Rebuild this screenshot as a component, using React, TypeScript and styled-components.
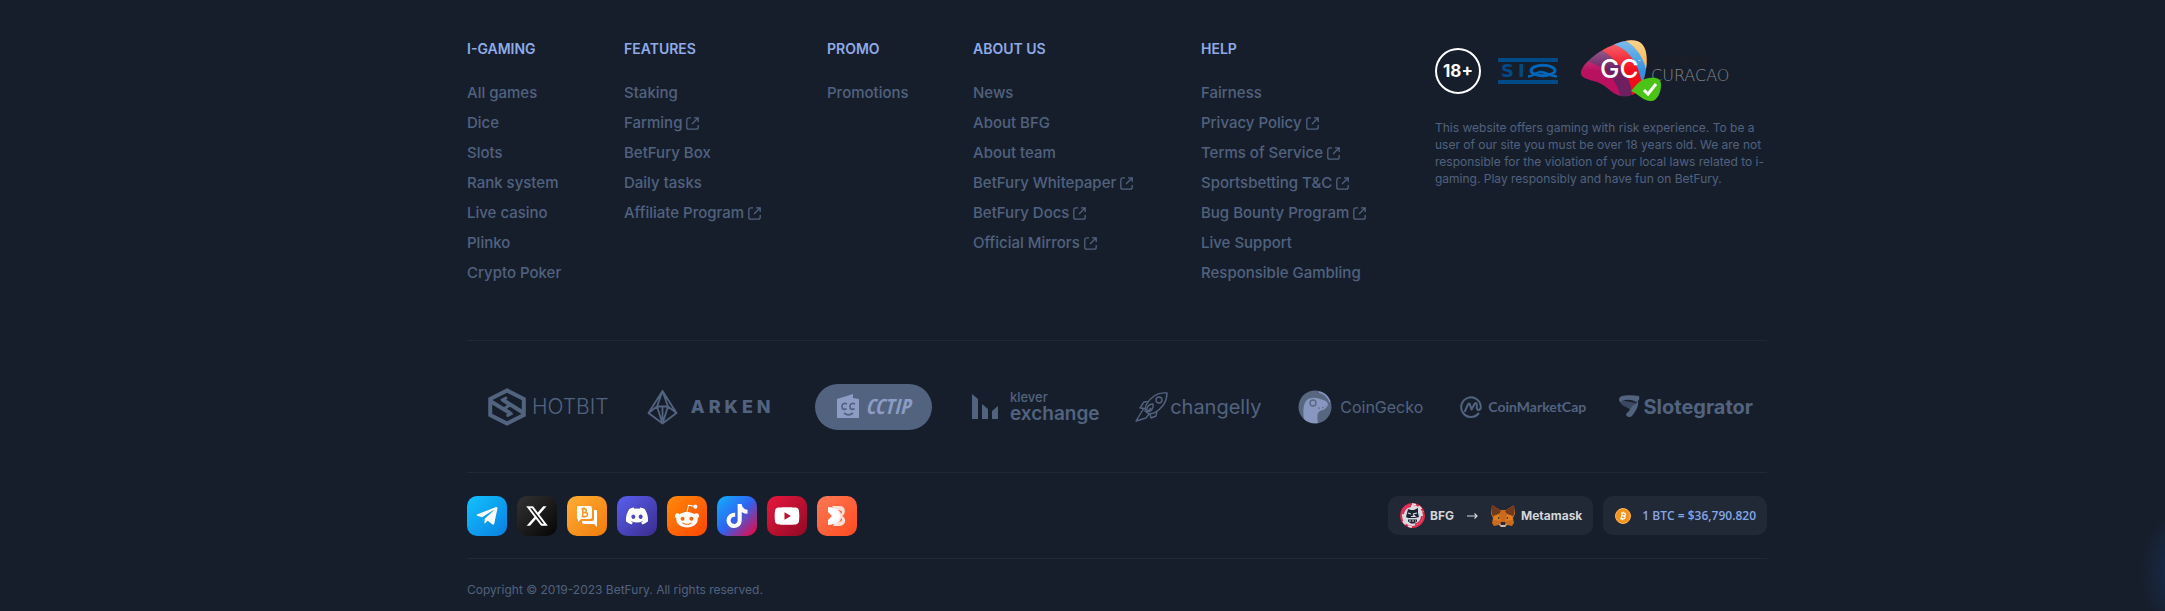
import React from "react";
import styled, { createGlobalStyle } from "styled-components";
import { FaTelegramPlane, FaDiscord, FaRedditAlien, FaTiktok, FaYoutube } from "react-icons/fa";
import { FaXTwitter } from "react-icons/fa6";

const GlobalStyle = createGlobalStyle`
  *, *::before, *::after { box-sizing: border-box; }
  body {
    margin: 0;
    background: #171e2b;
    font-family: Inter, "Open Sans", sans-serif;
  }
  svg { display: block; flex: none; }
`;

const Page = styled.div`
  min-height: 100vh;
  padding: 39px 16px 13px 85px;
  background: radial-gradient(circle 77px at calc(100% + 52px) calc(100% - 39px), #1b3f7a 0%, #172842 68%, #171e2b 100%) #171e2b;
`;

const Footer = styled.footer`
  max-width: 1300px;
  margin: 0 auto;
`;

const Columns = styled.div`
  display: grid;
  grid-template-columns: 157fr 203fr 146fr 228fr 234fr 332fr;
  padding-bottom: 57px;
`;

const Heading = styled.h2`
  margin: 0 0 24px;
  font-size: 14px;
  line-height: 20px;
  font-weight: 600;
  color: #8eabe8;
  text-transform: uppercase;
`;

const List = styled.ul`
  display: flex;
  flex-direction: column;
  gap: 10px;
  margin: 0;
  padding: 0;
  list-style: none;
`;

const NavLink = styled.a`
  display: flex;
  align-items: center;
  gap: 4px;
  width: fit-content;
  font-size: 15px;
  line-height: 20px;
  font-weight: 500;
  color: #50627f;
  text-decoration: none;
  white-space: nowrap;
`;

const Licences = styled.div`
  display: flex;
  align-items: center;
  height: 64px;
`;

const Age = styled.span`
  display: flex;
  align-items: center;
  justify-content: center;
  width: 46px;
  height: 46px;
  margin-right: 17px;
  border: 2px solid #fff;
  border-radius: 50%;
  font-size: 17px;
  font-weight: 700;
  color: #fff;
`;

const Note = styled.p`
  margin: 16px 0 0;
  font-size: 12px;
  line-height: 17px;
  font-weight: 400;
  color: #50627f;
`;

const Partners = styled.div`
  display: grid;
  grid-template-columns: repeat(8, 1fr);
  height: 133px;
  border-top: 1px solid #212936;
  border-bottom: 1px solid #212936;
`;

const Partner = styled.a<{ $gap: number }>`
  display: flex;
  align-items: center;
  justify-content: center;
  gap: ${(p) => p.$gap}px;
  color: #52637f;
  text-decoration: none;
  white-space: nowrap;
`;

const Mark = styled.span<{ $size: number; $weight: number; $family?: string; $italic?: boolean; $track?: number }>`
  font-family: ${(p) => p.$family || "Inter"}, sans-serif;
  font-size: ${(p) => p.$size}px;
  line-height: 1;
  font-weight: ${(p) => p.$weight};
  font-style: ${(p) => (p.$italic ? "italic" : "normal")};
  letter-spacing: ${(p) => (p.$track ? `${p.$track}px` : "normal")};
`;

const Stack = styled.span`
  display: flex;
  flex-direction: column;
`;

const CctipPill = styled.span`
  display: flex;
  align-items: center;
  justify-content: center;
  gap: 5px;
  width: 117px;
  height: 46px;
  border-radius: 23px;
  background: #52637f;
  color: #8c9cc4;
`;

const Bar = styled.div`
  display: flex;
  align-items: center;
  justify-content: space-between;
  height: 86px;
  border-bottom: 1px solid #212936;
`;

const Row = styled.div`
  display: flex;
  align-items: flex-end;
  gap: 10px;
`;

const Social = styled.a<{ $from: string; $to: string; $mid?: string }>`
  display: flex;
  align-items: center;
  justify-content: center;
  width: 40px;
  height: 40px;
  border-radius: 10px;
  background: linear-gradient(135deg, ${(p) => p.$from}, ${(p) => (p.$mid ? `${p.$mid}, ` : "")}${(p) => p.$to});
  color: #fff;
`;

const Chip = styled.button<{ $blue?: boolean }>`
  display: flex;
  align-items: center;
  height: 39px;
  padding: 0 11px 0 12px;
  border: 0;
  border-radius: 10px;
  background: #212936;
  font-family: ${(p) => (p.$blue ? '"Open Sans"' : "Inter")}, sans-serif;
  font-size: 12px;
  line-height: 16px;
  font-weight: ${(p) => (p.$blue ? 600 : 700)};
  color: ${(p) => (p.$blue ? "#84a6e8" : "#d3d5d9")};
  white-space: nowrap;
`;

const Spaced = styled.span<{ $l: number; $r?: number }>`
  margin-left: ${(p) => p.$l}px;
  margin-right: ${(p) => p.$r || 0}px;
`;

const Copyright = styled.p`
  margin: 22px 0 0;
  font-size: 12px;
  line-height: 17px;
  color: #50627f;
`;

const ExternalIcon = () => (
  <svg width="13" height="13" viewBox="0 0 13 13" fill="none" stroke="currentColor" strokeWidth="1.3" aria-hidden="true">
    <path d="M5 .8H2.8a2 2 0 0 0-2 2v7.4a2 2 0 0 0 2 2h7.4a2 2 0 0 0 2-2V8M8 .8h4.2V5M12 1 6 7" />
  </svg>
);

type Item = { label: string; external?: boolean };
const x = (label: string): Item => ({ label, external: true });
const l = (label: string): Item => ({ label });

const groups: { title: string; items: Item[] }[] = [
  { title: "I-Gaming", items: [l("All games"), l("Dice"), l("Slots"), l("Rank system"), l("Live casino"), l("Plinko"), l("Crypto Poker")] },
  { title: "Features", items: [l("Staking"), x("Farming"), l("BetFury Box"), l("Daily tasks"), x("Affiliate Program")] },
  { title: "Promo", items: [l("Promotions")] },
  { title: "About us", items: [l("News"), l("About BFG"), l("About team"), x("BetFury Whitepaper"), x("BetFury Docs"), x("Official Mirrors")] },
  {
    title: "Help",
    items: [l("Fairness"), x("Privacy Policy"), x("Terms of Service"), x("Sportsbetting T&C"), x("Bug Bounty Program"), l("Live Support"), l("Responsible Gambling")],
  },
];

const SiqLogo = () => (
  <svg width="60" height="28" viewBox="0 0 60 28" role="img" aria-label="SIQ">
    <path fill="#004b87" d="M0 1h60v4H0zM0 23h60v4H0z" />
    <g fontFamily="DejaVu Sans" fontWeight="700" fontSize="18" fill="#004b87">
      <text x="3" y="20">S</text>
      <text x="20" y="20">I</text>
    </g>
    <ellipse cx="45" cy="13.5" rx="12" ry="5.2" fill="none" stroke="#0066b8" strokeWidth="3" />
    <path d="M30 19.5c5 0 8-4 12-4.500 6-.5 9 4.500 17 4.500" fill="none" stroke="#0066b8" strokeWidth="2.400" />
  </svg>
);

const CuracaoLogo = () => (
  <svg width="160" height="64" viewBox="0 0 160 64" role="img" aria-label="Gaming Curacao">
    <defs>
      <clipPath id="gem">
        <path d="M1 35C0 28 14 14 31 7 41 2 50 0 57 2c9 3 11 14 9 28-2 14-7 25-17 27-9 2-16-3-23-9C17 40 3 42 1 35Z" />
      </clipPath>
      <linearGradient id="shine" x1="0" y1="0" x2="0" y2="1">
        <stop offset="0" stopColor="#fff" stopOpacity=".4" />
        <stop offset=".5" stopColor="#fff" stopOpacity="0" />
      </linearGradient>
    </defs>
    <g clipPath="url(#gem)">
      <path fill="#6d1f60" d="M0 0h70v64H0z" />
      <path fill="#b9105f" d="M0 20 9 23C24 27 35 40 39 52l2 8H0z" />
      <path fill="#f20d1c" d="M20 10C40 22 53 40 52 60h16V30C62 20 50 8 34 4z" />
      <path fill="#2f93e0" d="M32 5C45 8 57 20 61 40l1 9 8-20L58 8 42 1z" />
      <path fill="#f8b545" d="M43 1C52 4 62 14 66 30l4-2V0z" />
      <path fill="url(#shine)" d="M0 0h70v64H0z" />
    </g>
    <g fontFamily="DejaVu Sans">
      <text x="71" y="27" fontSize="14" fill="#1d1e24">GAMING</text>
      <text x="71" y="42" fontSize="16" fontWeight="200" fill="#85878c">CURACAO</text>
    </g>
    <g fontFamily="Inter" fill="#fff">
      <text x="20" y="39" fontSize="26" fontWeight="500">GC</text>
      <text x="58" y="24" fontSize="4">™</text>
    </g>
    <path fill="#4cc417" d="M51 52c4-4 8-12 18-13 9-1 12 1 12 7 0 8-4 16-10 16-8 0-11-6-20-10Z" />
    <path d="m64 51 4 4 8-10" fill="none" stroke="#fff" strokeWidth="3" />
  </svg>
);

const HotbitIcon = () => (
  <svg width="38" height="38" viewBox="0 0 38 38" fill="none" stroke="currentColor" aria-hidden="true">
    <path strokeWidth="4" d="M19 2.400 35.800 11v16L19 35.600 2.200 27V11z" />
    <path strokeWidth="4" d="M3 13.500 22 25M35 24.500 15 12" />
    <path strokeWidth="3" d="M15.500 21.500 22 16.500M13 12.500l6-3M18.500 28l6-3" />
  </svg>
);

const ArkenIcon = () => (
  <svg width="31" height="36" viewBox="0 0 31 36" fill="none" stroke="currentColor" strokeWidth="1.800" strokeLinejoin="round" aria-hidden="true">
    <path d="M15.500 2 29.500 24 15.500 34.500 1.500 24zM15.500 2 10 17.500l5.500 17L21 17.500zM10 17.500h11L29.500 24M10 17.500 1.500 24M15.500 17.500v17" />
  </svg>
);

const CctipIcon = () => (
  <svg width="24" height="25" viewBox="0 0 24 25" aria-hidden="true">
    <path fill="currentColor" d="M1 5 17 0v4l6 1v19H1z" />
    <g fill="none" stroke="#52637f" strokeWidth="1.700">
      <path d="M11 10c-3-1.500-5 0-5 2.500s2 4 4.500 2M19 10c-3-1.500-5 0-5 2.500s2 4 4.500 2M8 19c3 2.500 6 2.500 9 0" />
    </g>
  </svg>
);

const KleverIcon = () => (
  <svg width="27" height="26" viewBox="0 0 27 26" fill="currentColor" aria-hidden="true">
    <path d="M0 0 6 5v20H0zM10 10l6 5v10h-6zM26 12v13h-6v-8z" />
  </svg>
);

const RocketIcon = () => (
  <svg width="33" height="30" viewBox="0 0 33 30" fill="none" stroke="currentColor" strokeWidth="1.400" strokeLinejoin="round" aria-hidden="true">
    <path d="M32 1C23 0 16 4 11 13l-1 6 4 3 5-1C28 16 32 10 32 1ZM14 9.500 9 10l-4 6 5 .5M22 19l-1 5-5 2-1-4" />
    <circle cx="24" cy="8" r="3" />
    <path d="M9 16 1 29l10-3 3-4M18 12c-5 0-7 4-6 8 4 0 7-4 6-8ZM12 20l4-4" />
  </svg>
);

const GeckoIcon = () => (
  <svg width="34" height="34" viewBox="0 0 34 34" aria-hidden="true">
    <circle cx="17" cy="17" r="16.500" fill="#56677f" />
    <path fill="#8797bf" d="M6 29C5 22 5 15 8 11c3-4 9-4 14-2 4 1 7 2 8 5-1 5-5 6-8 7-3 2-3 6-2 12C14 34 9 32 6 29Z" />
    <path d="M21 2c5 1 9 5 11 10" fill="none" stroke="#8797bf" strokeWidth="1.500" />
    <circle cx="15" cy="13" r="3" fill="none" stroke="#56677f" strokeWidth="1.300" />
    <path d="M20 18c3 .5 5 0 8-2" fill="none" stroke="#56677f" strokeWidth="1" strokeDasharray="2 2" />
  </svg>
);

const CmcIcon = () => (
  <svg width="22" height="22" viewBox="0 0 22 22" fill="none" stroke="currentColor" strokeWidth="2" strokeLinecap="round" strokeLinejoin="round" aria-hidden="true">
    <path d="M18.500 17.500A9.800 9.800 0 1 1 20.800 11c0 3.500-4 4-4 1V9c0-2.500-1.500-2.500-2.300-1L11.500 13.500 10 8.500C9.500 7 8.500 7 8 8.500l-3 6.500" />
  </svg>
);

const SlotIcon = () => (
  <svg width="21" height="23" viewBox="0 0 21 23" aria-hidden="true">
    <path fill="#3b4860" d="M1 6c4-1 9 1 16 2l-5 8C9 11 2 12 1 6Z" />
    <path fill="currentColor" d="M0 5c0-3 2-4 6-4.500 5-.5 9-.5 14 .5 1 3 0 5-3 6C12 4 5 4 1 7.500zM19 5c1 6-2 11-6 16-2 2-6 1-6-2 3-3 5-5 6-8 3-1 5-3 6-6Z" />
  </svg>
);

const ChatIcon = () => (
  <svg width="22" height="22" viewBox="0 0 22 22" aria-hidden="true">
    <path fill="#fff" d="M2 1h12a2 2 0 0 1 2 2v9a2 2 0 0 1-2 2H5l-3 3v-3H1V2zM18 5h2a1 1 0 0 1 1 1v16l-3-3H8a2 2 0 0 1-2-2v-1h10a2 2 0 0 0 2-2z" />
    <path fill="none" stroke="#f6981d" strokeWidth="1.500" d="M5.500 3.700H9a2 2 0 0 1 0 3.800H6.500h3a2 2 0 0 1 0 4h-4M6.800 3.700v7.800M8 2.300v1.400M8 11.500v1.300" />
  </svg>
);

const RibbonIcon = () => (
  <svg width="20" height="22" viewBox="0 0 20 22" aria-hidden="true">
    <path fill="#ffe0d6" fillRule="evenodd" d="M5 1h8c6 0 6 8 2 10 5 2 4 10-3 10H6l5-10zM11 5c2 1 3 3 3 4 2-1 1-4-3-4ZM14 13c0 2-1 3-2 4 3 0 4-3 2-4Z" />
    <path fill="#fff" d="M1 2c7 0 12 4 12 9s-5 9-12 9l0-5 4-4-4-4z" />
  </svg>
);

const BfgIcon = () => (
  <svg width="25" height="25" viewBox="0 0 25 25" aria-hidden="true">
    <circle cx="12.500" cy="12.500" r="11.500" fill="#d9dbe0" stroke="#dc2a50" strokeWidth="2" />
    <path d="M12 1a11.500 11.500 0 0 1 11 8M12 24A11.500 11.500 0 0 1 2 16" fill="none" stroke="#e5e5ea" strokeWidth="1.500" strokeDasharray="4 3" />
    <path d="M3 11a9.500 9.500 0 0 1 8-8M22 13a9.500 9.500 0 0 1-7 8.500" fill="none" stroke="#dc2a50" strokeWidth="2" />
    <path fill="#1c2230" d="m8 6 3 1h3l4-2v5l1 4-4 1H8l-2-1 1-4z" />
    <path d="m8 10 3 1M17 10l-4 1M11 13.500h4l-2-2" fill="none" stroke="#d9dbe0" strokeWidth="1.200" />
    <path fill="#1c2230" d="M8 16.500h9v2l-3 2h-3l-3-2z" />
    <path d="M9 18h7" stroke="#d9dbe0" strokeDasharray="2 1" />
  </svg>
);

const FoxIcon = () => (
  <svg width="24" height="23" viewBox="0 0 24 23" aria-hidden="true">
    <path fill="#c96a1c" d="m1 1 8 5h6l8-5 1 9-2 4 1 5-2 3-5-1-2 2h-4l-2-2-5 1-2-3 1-5-2-4z" />
    <path fill="#6f3a1d" d="m1 1 9 6-2 3-6 2-1-2zM23 1l-9 6 2 3 6 2 1-2z" />
    <path fill="#e07c22" d="m8 10 2 7-8-1 1-4zM16 10l-2 7 8-1-1-4z" />
    <path fill="#2a2a2e" d="m7 13 2 1-2 1zM17 13l-2 1 2 1zM10 18h4l1 2H9z" />
    <path fill="#c9bdb2" d="m8 20 2-.5h4l2 .5-2 3h-4z" />
    <path fill="#2a2a2e" d="M10 19h4l.5 2h-5z" />
  </svg>
);

const BtcIcon = () => (
  <svg width="16" height="16" viewBox="0 0 16 16" aria-hidden="true">
    <circle cx="8" cy="8" r="7.500" fill="#f7931a" stroke="#f9b65f" />
    <path d="M6.200 4.800 9.200 5.200c2 .5 1.500 2.600-.4 2.600H6.500h2.200c2.300.3 1.700 3-.4 3L5.200 10.600M7.200 5l-1 5.800M8.400 3.800 8.200 5M7.400 11l-.2 1.200" fill="none" stroke="#fff" strokeWidth="1.300" />
  </svg>
);

const ArrowIcon = () => (
  <svg width="11" height="8" viewBox="0 0 11 8" fill="none" stroke="currentColor" strokeWidth="1.200" aria-hidden="true">
    <path d="M0 4h10M7.500 1.500 10 4 7.500 6.500" />
  </svg>
);

export default function App() {
  return (
    <>
      <GlobalStyle />
      <Page>
        <Footer>
          <Columns>
            {groups.map((group) => (
              <nav key={group.title} aria-label={group.title}>
                <Heading>{group.title}</Heading>
                <List>
                  {group.items.map((item) => (
                    <li key={item.label}>
                      <NavLink href="#">
                        {item.label}
                        {item.external && <ExternalIcon />}
                      </NavLink>
                    </li>
                  ))}
                </List>
              </nav>
            ))}
            <aside>
              <Licences>
                <Age>18+</Age>
                <SiqLogo />
                <Spaced $l={22}>
                  <CuracaoLogo />
                </Spaced>
              </Licences>
              <Note>
                This website offers gaming with risk experience. To be a<br />
                user of our site you must be over 18 years old. We are not<br />
                responsible for the violation of your local laws related to i-<br />
                gaming. Play responsibly and have fun on BetFury.
              </Note>
            </aside>
          </Columns>

          <Partners>
            <Partner href="#" $gap={6}>
              <HotbitIcon />
              <Mark $size={21} $weight={300}>HOTBIT</Mark>
            </Partner>
            <Partner href="#" $gap={13}>
              <ArkenIcon />
              <Mark $size={18} $weight={800} $track={4}>ARKEN</Mark>
            </Partner>
            <Partner href="#" $gap={0}>
              <CctipPill>
                <CctipIcon />
                <Mark $size={21} $weight={800} $italic $family="Open Sans Condensed, Open Sans">CCTIP</Mark>
              </CctipPill>
            </Partner>
            <Partner href="#" $gap={11}>
              <KleverIcon />
              <Stack>
                <Mark $size={13} $weight={500}>klever</Mark>
                <Mark $size={19} $weight={600}>exchange</Mark>
              </Stack>
            </Partner>
            <Partner href="#" $gap={2}>
              <RocketIcon />
              <Mark $size={20} $weight={400}>changelly</Mark>
            </Partner>
            <Partner href="#" $gap={8}>
              <GeckoIcon />
              <Mark $size={16} $weight={400}>CoinGecko</Mark>
            </Partner>
            <Partner href="#" $gap={6}>
              <CmcIcon />
              <Mark $size={14} $weight={700} $family="Lato">CoinMarketCap</Mark>
            </Partner>
            <Partner href="#" $gap={4}>
              <SlotIcon />
              <Mark $size={20} $weight={700}>Slotegrator</Mark>
            </Partner>
          </Partners>

          <Bar>
            <Row>
              <Social href="#" aria-label="Telegram" $from="#12c2ff" $to="#0a7fe0"><FaTelegramPlane size={24} /></Social>
              <Social href="#" aria-label="X" $from="#333333" $to="#050505"><FaXTwitter size={24} /></Social>
              <Social href="#" aria-label="Bitcointalk" $from="#ffad33" $to="#f07c0c"><ChatIcon /></Social>
              <Social href="#" aria-label="Discord" $from="#5a5ff0" $to="#3a2c8c"><FaDiscord size={24} /></Social>
              <Social href="#" aria-label="Reddit" $from="#ff8a0a" $to="#ff4500"><FaRedditAlien size={26} /></Social>
              <Social href="#" aria-label="TikTok" $from="#12b0ff" $mid="#2f63f0" $to="#fa0032"><FaTiktok size={24} /></Social>
              <Social href="#" aria-label="YouTube" $from="#e8173f" $to="#8f0a22"><FaYoutube size={26} /></Social>
              <Social href="#" aria-label="Blog" $from="#ff7a55" $to="#ff4a20"><RibbonIcon /></Social>
            </Row>
            <Row>
              <Chip type="button">
                <BfgIcon />
                <Spaced $l={5} $r={13}>BFG</Spaced>
                <ArrowIcon />
                <Spaced $l={13} $r={6}><FoxIcon /></Spaced>
                Metamask
              </Chip>
              <Chip type="button" $blue>
                <BtcIcon />
                <Spaced $l={11}>1 BTC = $36,790.820</Spaced>
              </Chip>
            </Row>
          </Bar>
          <Copyright>Copyright © 2019-2023 BetFury. All rights reserved.</Copyright>
        </Footer>
      </Page>
    </>
  );
}
